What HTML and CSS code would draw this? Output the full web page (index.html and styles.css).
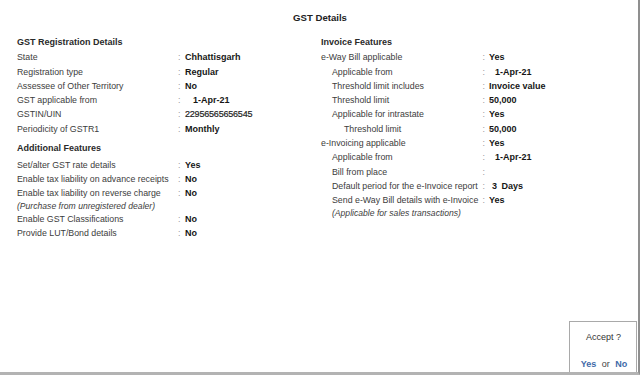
FILE: index.html
```html
<!DOCTYPE html>
<html>
<head>
<meta charset="utf-8">
<link rel="stylesheet" href="styles.css">
</head>
<body>
<div class="screen">
  <div class="title">GST Details</div>
  <div class="columns">
    <section class="col left">
      <div class="head">GST Registration Details</div>
      <div class="row"><span class="lbl">State</span><span class="colon">:</span><span class="val">Chhattisgarh</span></div>
      <div class="row"><span class="lbl">Registration type</span><span class="colon">:</span><span class="val">Regular</span></div>
      <div class="row"><span class="lbl">Assessee of Other Territory</span><span class="colon">:</span><span class="val">No</span></div>
      <div class="row"><span class="lbl">GST applicable from</span><span class="colon">:</span><span class="val date">1-Apr-21</span></div>
      <div class="row"><span class="lbl">GSTIN/UIN</span><span class="colon">:</span><span class="val num">22956565656545</span></div>
      <div class="row"><span class="lbl">Periodicity of GSTR1</span><span class="colon">:</span><span class="val">Monthly</span></div>
      <div class="head head2">Additional Features</div>
      <div class="row"><span class="lbl">Set/alter GST rate details</span><span class="colon">:</span><span class="val">Yes</span></div>
      <div class="row"><span class="lbl">Enable tax liability on advance receipts</span><span class="colon">:</span><span class="val">No</span></div>
      <div class="row"><span class="lbl">Enable tax liability on reverse charge</span><span class="colon">:</span><span class="val">No</span></div>
      <div class="note">(Purchase from unregistered dealer)</div>
      <div class="row"><span class="lbl">Enable GST Classifications</span><span class="colon">:</span><span class="val">No</span></div>
      <div class="row"><span class="lbl">Provide LUT/Bond details</span><span class="colon">:</span><span class="val">No</span></div>
    </section>
    <section class="col right">
      <div class="head">Invoice Features</div>
      <div class="row"><span class="lbl">e-Way Bill applicable</span><span class="colon">:</span><span class="val">Yes</span></div>
      <div class="row"><span class="lbl sub">Applicable from</span><span class="colon">:</span><span class="val date">1-Apr-21</span></div>
      <div class="row"><span class="lbl sub">Threshold limit includes</span><span class="colon">:</span><span class="val">Invoice value</span></div>
      <div class="row"><span class="lbl sub">Threshold limit</span><span class="colon">:</span><span class="val">50,000</span></div>
      <div class="row"><span class="lbl sub">Applicable for intrastate</span><span class="colon">:</span><span class="val">Yes</span></div>
      <div class="row"><span class="lbl subsub">Threshold limit</span><span class="colon">:</span><span class="val">50,000</span></div>
      <div class="row"><span class="lbl">e-Invoicing applicable</span><span class="colon">:</span><span class="val">Yes</span></div>
      <div class="row"><span class="lbl sub">Applicable from</span><span class="colon">:</span><span class="val date">1-Apr-21</span></div>
      <div class="row"><span class="lbl sub">Bill from place</span><span class="colon">:</span><span class="val"></span></div>
      <div class="row"><span class="lbl sub">Default period for the e-Invoice report</span><span class="colon">:</span><span class="val days">3 Days</span></div>
      <div class="row"><span class="lbl sub">Send e-Way Bill details with e-Invoice</span><span class="colon">:</span><span class="val">Yes</span></div>
      <div class="note sub">(Applicable for sales transactions)</div>
    </section>
  </div>
  <div class="accept">
    <div class="accept-q">Accept ?</div>
    <div class="accept-a"><span class="opt">Yes</span> <span class="or">or</span> <span class="opt">No</span></div>
  </div>
</div>
</body>
</html>
```
FILE: styles.css
```css
html, body {
  margin: 0;
  padding: 0;
  background: #ffffff;
}
body {
  font-family: "Liberation Sans", Arial, sans-serif;
  color: #3a3a3a;
}
.screen {
  box-sizing: border-box;
  width: 640px;
  height: 375px;
  border-right: 2px solid #8f8f8f;
  border-bottom: 3px solid #b3b3b3;
  display: flex;
  flex-direction: column;
  padding-top: 11px;
}
.title {
  text-align: center;
  font-weight: bold;
  font-size: 9.6px;
  line-height: 14px;
  color: #222;
  margin-bottom: 9.7px;
  padding-left: 2px;
}
.columns {
  display: grid;
  grid-template-columns: 304px auto;
  padding-left: 17px;
}
.head {
  font-weight: bold;
  font-size: 9px;
  line-height: 14px;
  color: #2a2a2a;
  margin-bottom: 1.6px;
}
.head2 {
  margin-top: 5.3px;
  margin-bottom: 2.5px;
}
.row {
  display: grid;
  grid-template-columns: 161px 7px auto;
  height: 14.3px;
  line-height: 14.3px;
  white-space: nowrap;
}
.right .row {
  grid-template-columns: 161.5px 6.5px auto;
}
.lbl {
  font-size: 8.8px;
  color: #3c3c3c;
}
.sub {
  padding-left: 11px;
}
.subsub {
  padding-left: 23px;
}
.colon {
  font-size: 8.8px;
  color: #9a9a9a;
}
.val {
  font-size: 9px;
  font-weight: bold;
  color: #161616;
}
.num {
  font-weight: normal;
  color: #1e1e1e;
  letter-spacing: -0.2px;
  -webkit-text-stroke: 0.2px #1e1e1e;
}
.left .date {
  padding-left: 8px;
}
.right .date {
  padding-left: 6px;
}
.days {
  padding-left: 3px;
  word-spacing: 2px;
}
.note {
  font-size: 8.6px;
  font-style: italic;
  line-height: 11px;
  color: #3c3c3c;
}
.accept {
  margin-top: auto;
  align-self: flex-end;
  margin-right: 1px;
  box-sizing: border-box;
  width: 68px;
  height: 51px;
  border: 1px solid #a9a9a9;
  border-bottom: none;
  text-align: center;
  font-size: 9px;
  padding-top: 8px;
}
.accept-q {
  line-height: 14px;
  color: #333;
  padding-left: 1px;
}
.accept-a {
  line-height: 14px;
  margin-top: 13.3px;
  color: #333;
  padding-left: 2px;
  word-spacing: 3px;
}
.opt {
  font-weight: bold;
  color: #3f6aa8;
}
.or {
  color: #444;
}
```
